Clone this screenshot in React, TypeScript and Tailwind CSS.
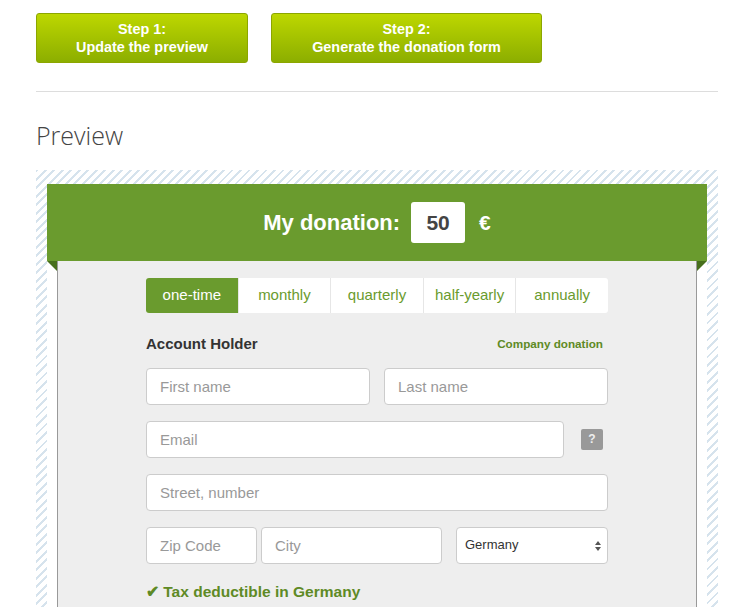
const tabs = ['one-time', 'monthly', 'quarterly', 'half-yearly', 'annually'];

const inputCls =
  'h-[37px] rounded-[4px] border border-[#cccccc] bg-white px-[13px] text-[15px] text-[#333] placeholder:text-[#999] outline-none';

const StepButton = ({ step, label, width }: { step: string; label: string; width: string }) => (
  <button
    className={`${width} h-[50px] rounded-[3px] border border-[#8ca600] bg-linear-to-b from-[#bdd700] to-[#8cae00] text-[14.4px] font-bold leading-[18px] text-white`}
  >
    {step}
    <br />
    {label}
  </button>
);

const App = () => (
  <div className="min-h-[607px] bg-white pl-9 font-['Liberation_Sans',Arial,sans-serif]" style={{ width: 752 }}>
    <div className="w-[682px]">
      <div className="flex gap-[23px] pt-[13px]">
        <StepButton step="Step 1:" label="Update the preview" width="w-[212px]" />
        <StepButton step="Step 2:" label="Generate the donation form" width="w-[271px]" />
      </div>

      <hr className="mt-[28px] border-0 border-t border-[#dddddd]" />

      <h2 className="mt-[28px] font-['Open_Sans',sans-serif] text-[25px] font-light leading-[30px] text-[#444]">Preview</h2>

      <div className="mt-[20px] bg-[repeating-linear-gradient(135deg,#d6e3ed_0px,#d6e3ed_2px,#ffffff_2px,#ffffff_6px)] px-[11px] pt-[14px]">
        <div className="bg-white">
          <div className="relative flex h-[77px] items-center justify-center bg-[#6a9b2e]">
            <span className="text-[22px] font-bold text-white">My donation:</span>
            <div className="ml-[11px] flex h-[41px] w-[54px] items-center justify-center rounded-[3px] bg-white text-[21px] font-bold text-[#444]">
              50
            </div>
            <span className="ml-[14px] text-[21px] font-bold text-white">€</span>
            <span className="absolute left-0 top-full h-0 w-0 border-l-[10px] border-t-[10px] border-l-transparent border-t-[#476f1c]" />
            <span className="absolute right-0 top-full h-0 w-0 border-r-[10px] border-t-[10px] border-r-transparent border-t-[#476f1c]" />
          </div>

          <div className="mx-[10px] border-x border-[#999] bg-[#eeeeee] px-[88px] pb-[40px] pt-[17px]">
            <div className="flex h-[35px] overflow-hidden rounded-[3px] bg-white">
              {tabs.map((t, i) => (
                <div
                  key={t}
                  className={`flex flex-1 items-center justify-center text-[15px] ${
                    i === 0 ? 'bg-[#6a9b2e] text-white' : 'border-l border-[#e6e6e6] text-[#6a9b2e]'
                  }`}
                >
                  {t}
                </div>
              ))}
            </div>

            <div className="mt-[20px] flex items-center justify-between">
              <span className="text-[15px] font-bold text-[#333]">Account Holder</span>
              <span className="mr-[5px] text-[11.7px] font-bold text-[#5e8a25]">Company donation</span>
            </div>

            <div className="mt-[12px] flex flex-col gap-[16px]">
              <div className="flex gap-[14px]">
                <input className={`${inputCls} w-[224px]`} placeholder="First name" />
                <input className={`${inputCls} w-[224px]`} placeholder="Last name" />
              </div>
              <div className="flex items-center">
                <input className={`${inputCls} w-[418px]`} placeholder="Email" />
                <div className="ml-[17px] flex h-[21px] w-[22px] items-center justify-center rounded-[2px] bg-[#999] text-[12px] font-bold text-[#eee]">
                  ?
                </div>
              </div>
              <input className={`${inputCls} w-full`} placeholder="Street, number" />
              <div className="flex">
                <input className={`${inputCls} w-[111px]`} placeholder="Zip Code" />
                <input className={`${inputCls} ml-[4px] w-[181px]`} placeholder="City" />
                <div className="relative ml-[14px] w-[152px]">
                  <select className="h-[37px] w-full appearance-none rounded-[4px] border border-[#cccccc] bg-white pl-[8px] text-[13px] text-[#333] outline-none">
                    <option>Germany</option>
                  </select>
                  <svg className="absolute right-[7px] top-[14px]" width="6" height="10" viewBox="0 0 6 10">
                    <path d="M3 0L6 4H0z" fill="#555" />
                    <path d="M3 10L0 6h6z" fill="#555" />
                  </svg>
                </div>
              </div>
            </div>

            <div className="mt-[16px] text-[15.5px] font-bold text-[#5e8a25]">✔ Tax deductible in Germany</div>
          </div>
        </div>
      </div>
    </div>
  </div>
);

export default App;
